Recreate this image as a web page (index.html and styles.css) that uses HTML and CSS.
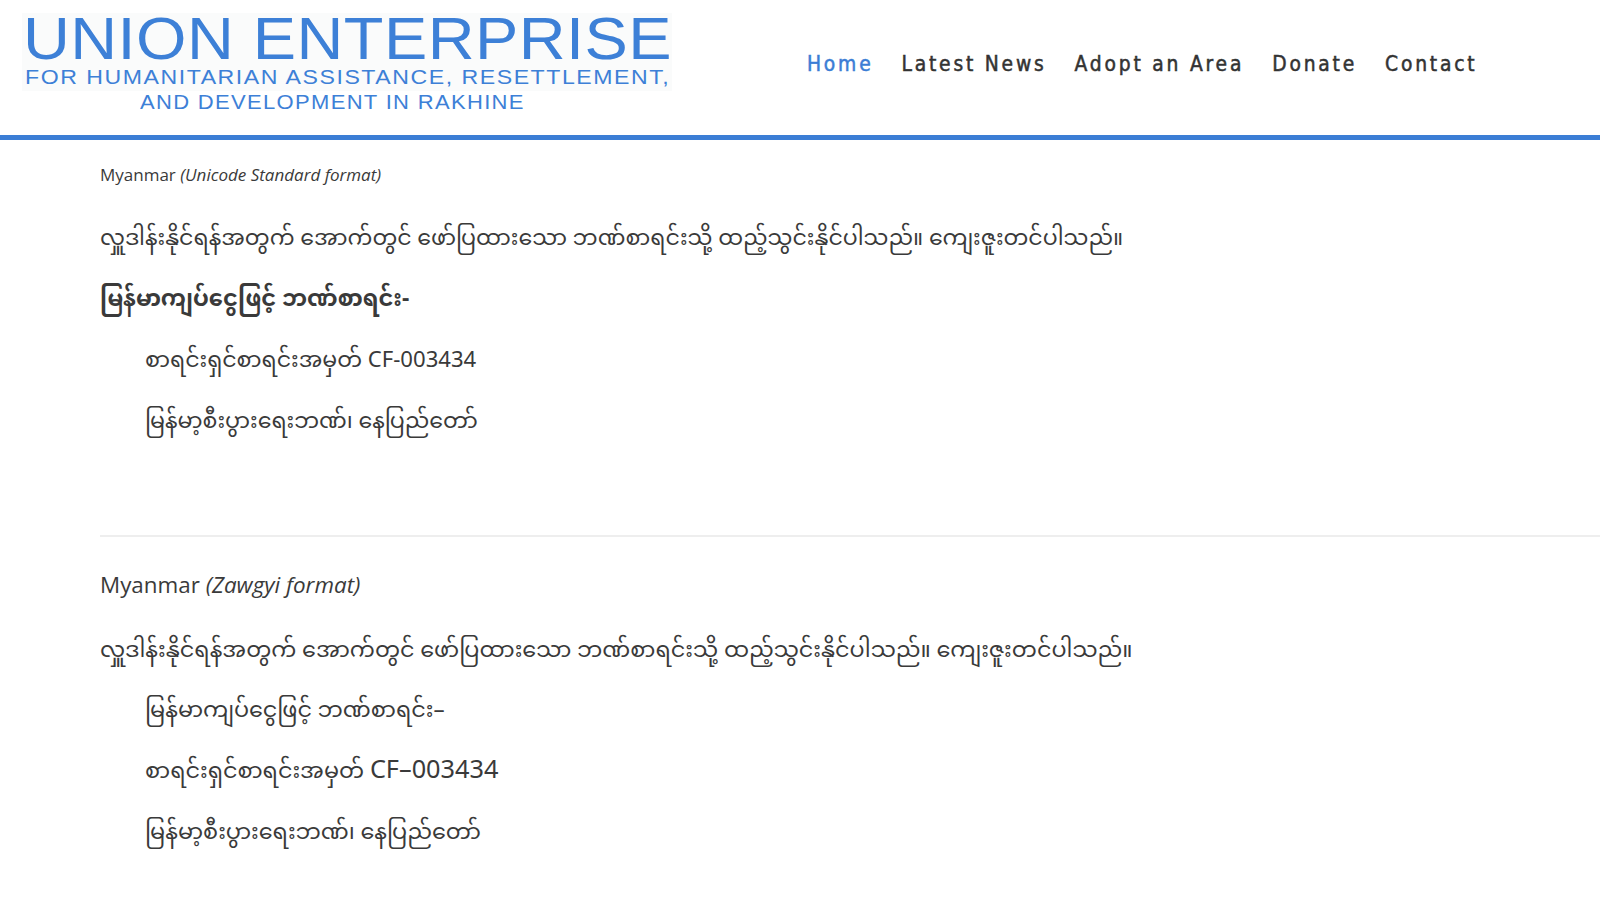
FILE: index.html
```html
<!DOCTYPE html>
<html lang="my">
<head>
<meta charset="utf-8">
<title>Union Enterprise</title>
<link rel="stylesheet" href="styles.css">
</head>
<body>
<header class="site-header">
  <div class="logo">
    <div class="logo-top">
      <div class="logo-title"><span class="stretch">UNION ENTERPRISE</span></div>
      <div class="logo-sub"><span class="stretch">FOR HUMANITARIAN ASSISTANCE, RESETTLEMENT,</span></div>
    </div>
    <div class="logo-sub logo-sub-second"><span class="stretch">AND DEVELOPMENT IN RAKHINE</span></div>
  </div>
  <nav class="main-nav">
    <a class="nav-link active" href="#">Home</a>
    <a class="nav-link" href="#">Latest News</a>
    <a class="nav-link" href="#">Adopt an Area</a>
    <a class="nav-link" href="#">Donate</a>
    <a class="nav-link" href="#">Contact</a>
  </nav>
</header>
<main class="content">
  <section class="block block-unicode">
    <p class="label">Myanmar <em>(Unicode Standard format)</em></p>
    <p class="line first">လှူဒါန်းနိုင်ရန်အတွက် အောက်တွင် ဖော်ပြထားသော ဘဏ်စာရင်းသို့ ထည့်သွင်းနိုင်ပါသည်။ ကျေးဇူးတင်ပါသည်။</p>
    <p class="line"><strong>မြန်မာကျပ်ငွေဖြင့် ဘဏ်စာရင်း-</strong></p>
    <p class="line indent">စာရင်းရှင်စာရင်းအမှတ် CF-003434</p>
    <p class="line indent">မြန်မာ့စီးပွားရေးဘဏ်၊ နေပြည်တော်</p>
  </section>
  <hr class="divider">
  <section class="block block-zawgyi">
    <p class="label">Myanmar <em>(Zawgyi format)</em></p>
    <p class="line first">လှူဒါန်းနိုင်ရန်အတွက် အောက်တွင် ဖော်ပြထားသော ဘဏ်စာရင်းသို့ ထည့်သွင်းနိုင်ပါသည်။ ကျေးဇူးတင်ပါသည်။</p>
    <p class="line indent">မြန်မာကျပ်ငွေဖြင့် ဘဏ်စာရင်း–</p>
    <p class="line indent">စာရင်းရှင်စာရင်းအမှတ် <span class="latin-big">CF–003434</span></p>
    <p class="line indent">မြန်မာ့စီးပွားရေးဘဏ်၊ နေပြည်တော်</p>
  </section>
</main>
</body>
</html>
```
FILE: styles.css
```css
html, body {
  margin: 0;
  padding: 0;
  background: #ffffff;
}

body {
  font-family: "Open Sans", "Noto Sans Myanmar", "Padauk", "Myanmar Text", "Noto Sans", sans-serif;
  color: #3a3a3a;
  overflow: hidden;
}

.site-header {
  display: flex;
  align-items: flex-start;
  height: 135px;
  border-bottom: 5px solid #3b7dd5;
  box-sizing: content-box;
}

.logo {
  margin: 13px 0 0 22px;
  width: 650px;
  color: #3d80d7;
  font-family: "Liberation Sans", Arial, sans-serif;
  display: flex;
  flex-direction: column;
}

.logo-top {
  background: #fafbfb;
  padding-bottom: 2px;
}

.stretch {
  display: inline-block;
  transform: scaleX(1.1);
  transform-origin: 0 50%;
  white-space: nowrap;
}

.logo-title {
  font-size: 59px;
  line-height: 53px;
  letter-spacing: 0.4px;
  padding-left: 1px;
}

.logo-sub {
  font-size: 21px;
  line-height: 22.5px;
  letter-spacing: 1.4px;
  padding-left: 3px;
}

.logo-sub-second {
  font-size: 20px;
  letter-spacing: 1.2px;
  padding-left: 118px;
}

.main-nav {
  display: flex;
  margin-left: 135px;
  margin-top: 49px;
}

.nav-link {
  font-family: "DejaVu Sans Condensed", "DejaVu Sans", sans-serif;
  font-weight: normal;
  font-size: 20.8px;
  letter-spacing: 2.8px;
  -webkit-text-stroke: 0.5px currentColor;
  color: #333333;
  text-decoration: none;
  margin-right: 28px;
  line-height: 30px;
}

.nav-link.active {
  color: #3b7dd5;
}

.content {
  padding: 20px 0 0 100px;
}

.block p {
  margin: 0;
}

.label {
  line-height: 30px;
  white-space: nowrap;
}

.block-unicode .label {
  font-size: 17px;
  margin-bottom: 20px;
}

.block-zawgyi .label {
  font-size: 22.4px;
  margin-bottom: 22px;
}

.line {
  font-family: "Noto Sans Myanmar", "Padauk", "Myanmar Text", "Open Sans", sans-serif;
  font-size: 22.1px;
  line-height: 60.9px;
  white-space: nowrap;
}

.line strong {
  font-weight: bold;
  font-size: 22.6px;
}

.indent {
  padding-left: 45px;
}

.block-zawgyi .line {
  font-size: 22.3px;
  line-height: 60.8px;
}

.latin-big {
  font-size: 25.3px;
}

.divider {
  border: 0;
  border-top: 2px solid #eeeeee;
  margin: 81px 0 33px 0;
}
```
